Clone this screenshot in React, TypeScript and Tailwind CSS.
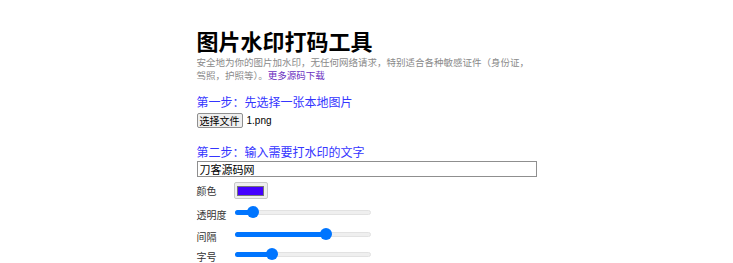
import React from "react";

function Slider({ value }: { value: number }) {
  const left = 6 + value * 124;
  return (
    <div className="relative h-[12px] w-[136px] shrink-0">
      <div className="absolute left-0 right-0 top-[4px] h-[5px] rounded-full border border-[#e2e2e2] bg-[#efefef]" />
      <div className="absolute left-0 top-[4px] h-[5px] rounded-l-full bg-[#0075ff]" style={{ width: left }} />
      <div className="absolute top-0 h-[12px] w-[12px] rounded-full bg-[#0075ff]" style={{ left: left - 6 }} />
    </div>
  );
}

function Row({ label, children, className }: { label: string; children: React.ReactNode; className: string }) {
  return (
    <div className={"flex items-start " + className}>
      <span className="mt-[2px] w-[38px] text-[10px] leading-[13px] text-[#333]">{label}</span>
      {children}
    </div>
  );
}

export default function App() {
  const font = { fontFamily: '"Noto Sans CJK SC", "Microsoft YaHei", sans-serif' };
  return (
    <div className="min-h-[263px] bg-white" style={font}>
      <div className="mx-auto w-[340px] pt-[27px]">
        <h1 className="text-[22px] font-bold leading-[26px] text-black">图片水印打码工具</h1>
        <p className="mt-[3px] text-[9.5px] leading-[13px] text-[#8a8a8a]">
          安全地为你的图片加水印，无任何网络请求，特别适合各种敏感证件（身份证，驾照，护照等）。
          <a className="text-[#6a2fbf]">更多源码下载</a>
        </p>

        <div className="mt-[12px] text-[12px] leading-[16px] text-[#3535ff]">第一步：先选择一张本地图片</div>
        <div className="mt-[3px] flex items-center gap-[4px]">
          <button className="h-[15px] rounded-[2px] border border-[#8f8f8f] bg-[#efefef] px-[2px] text-[10px] leading-[13px] text-black">
            选择文件
          </button>
          <span className="text-[10px] leading-[13px] text-black" style={{ fontFamily: '"Liberation Sans", "Noto Sans CJK SC", sans-serif' }}>1.png</span>
        </div>

        <div className="mt-[16px] text-[12px] leading-[16px] text-[#3535ff]">第二步：输入需要打水印的文字</div>
        <div className="mt-[1px] h-[16px] w-[340px] border border-[#8f8f8f] px-[2px] text-[11px] leading-[14px] text-black">
          刀客源码网
        </div>

        <Row label="颜色" className="mt-[5px]">
          <div className="ml-[-1px] flex h-[17px] w-[34px] items-center justify-center rounded-[2px] border border-[#c8c8c8] bg-[#efefef]">
            <div className="h-[10px] w-[27px] border border-[#777] bg-[#4400ff]" />
          </div>
        </Row>

        <Row label="透明度" className="mt-[7px]">
          <Slider value={0.1} />
        </Row>
        <Row label="间隔" className="mt-[7px]">
          <Slider value={0.69} />
        </Row>
        <Row label="字号" className="mt-[5px]">
          <Slider value={0.25} />
        </Row>
      </div>
    </div>
  );
}
